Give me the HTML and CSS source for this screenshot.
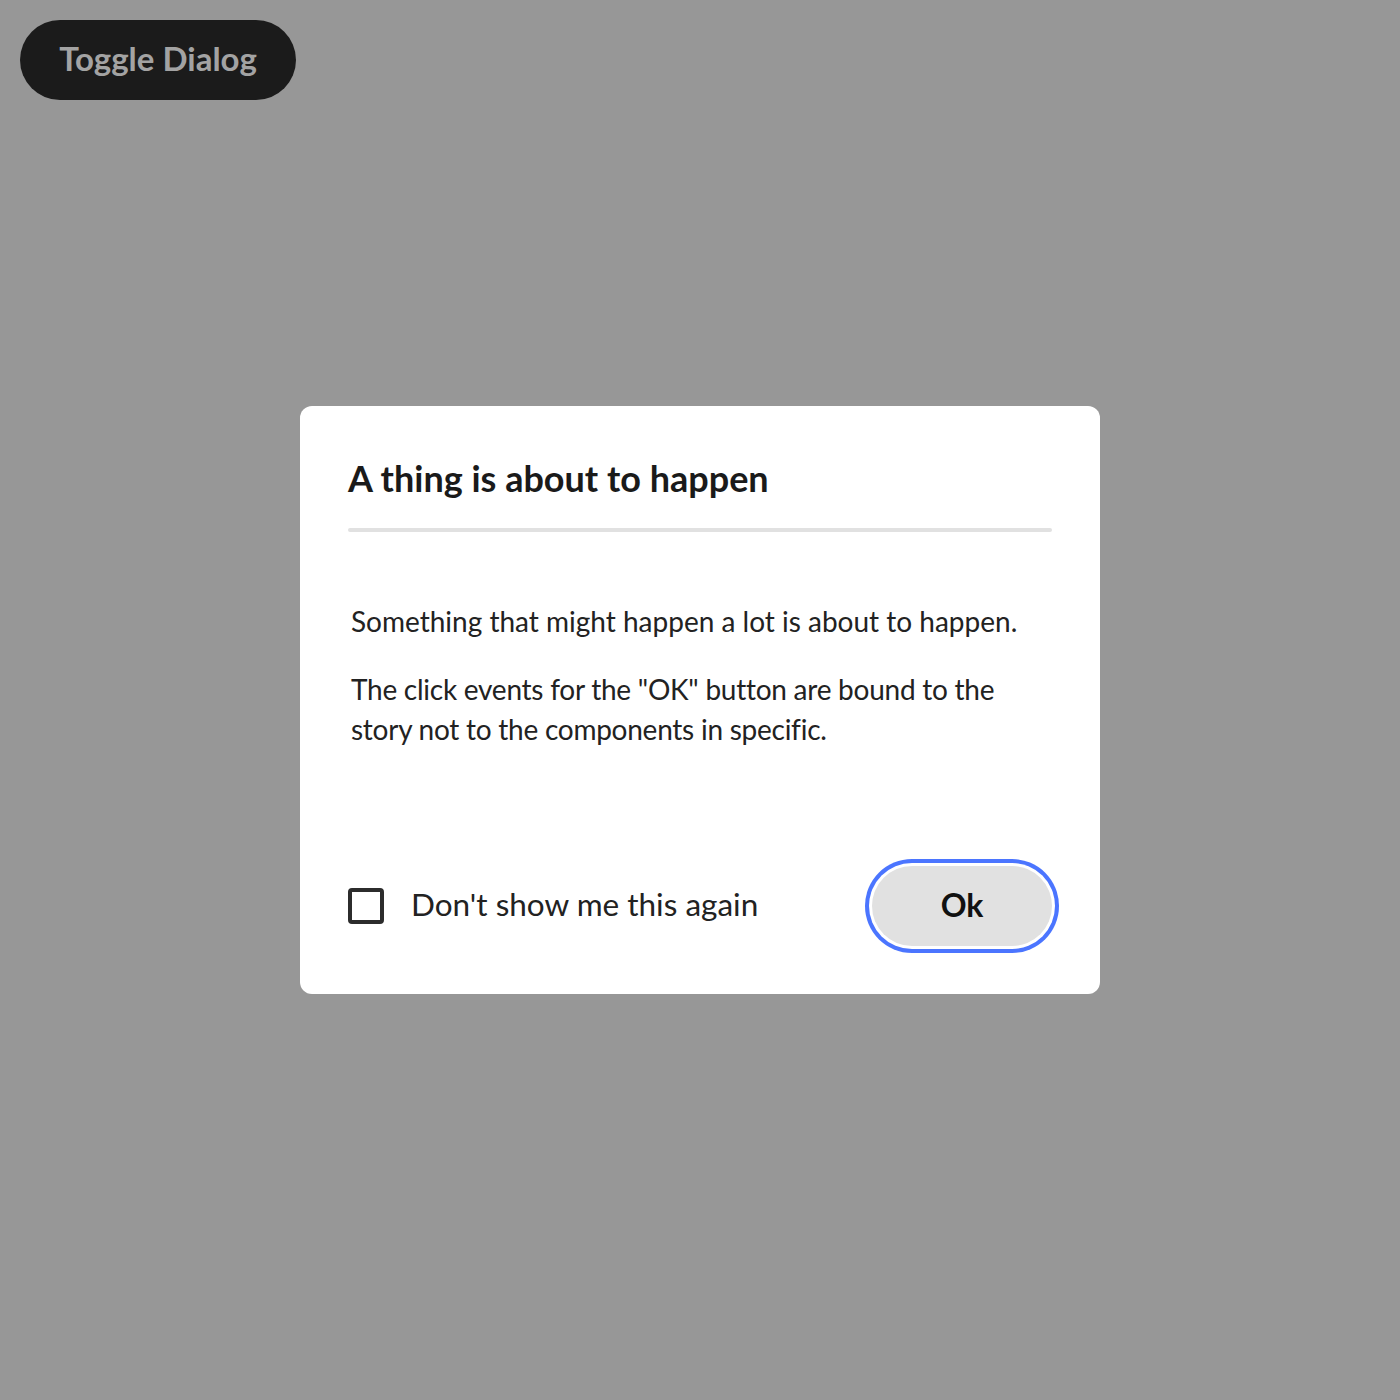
FILE: index.html
```html
<!DOCTYPE html>
<html lang="en">
<head>
<meta charset="utf-8">
<title>Dialog</title>
<link rel="stylesheet" href="styles.css">
</head>
<body>
  <main class="page">
    <button class="toggle-btn" type="button">Toggle Dialog</button>
  </main>
  <div class="overlay">
    <section class="dialog" role="dialog" aria-labelledby="dlg-title">
      <h2 class="dialog-title" id="dlg-title">A thing is about to happen</h2>
      <hr class="dialog-divider">
      <div class="dialog-body">
        <p>Something that might happen a lot is about to happen.</p>
        <p>The click events for the "OK" button are bound to the story not to the components in specific.</p>
      </div>
      <footer class="dialog-footer">
        <label class="check">
          <span class="check-box"></span>
          <span class="check-label">Don't show me this again</span>
        </label>
        <button class="ok-btn" type="button">Ok</button>
      </footer>
    </section>
  </div>
</body>
</html>
```
FILE: styles.css
```css
html, body {
  margin: 0;
  padding: 0;
}
body {
  background: #979797;
  font-family: Lato, "Noto Sans", "Liberation Sans", sans-serif;
  width: 1400px;
  height: 1400px;
}
.page {
  padding: 20px;
}
.toggle-btn {
  display: flex;
  align-items: center;
  justify-content: center;
  width: 276px;
  height: 80px;
  border: none;
  border-radius: 40px;
  background: #1b1b1b;
  color: #a3a3a3;
  font-family: inherit;
  font-weight: 700;
  font-size: 33px;
  padding: 0 0 4px;
}
.overlay {
  position: fixed;
  inset: 0;
  display: flex;
  align-items: center;
  justify-content: center;
}
.dialog {
  width: 800px;
  height: 588px;
  box-sizing: border-box;
  background: #fff;
  border-radius: 12px;
  padding: 48px;
  display: flex;
  flex-direction: column;
}
.dialog-title {
  margin: 0;
  font-size: 36px;
  font-weight: 700;
  line-height: 52px;
  color: #1a1a1a;
  margin-top: -2px;
}
.dialog-divider {
  margin: 24px 0 0;
  height: 4px;
  border: none;
  border-radius: 2px;
  background: #e1e1e1;
}
.dialog-body {
  margin-top: 69px;
  padding-left: 3px;
  font-size: 28px;
  line-height: 40px;
  color: #222;
  flex: 1;
}
.dialog-body p {
  margin: 0 0 28px;
}
.dialog-body p + p {
  letter-spacing: -0.25px;
}
.dialog-footer {
  display: flex;
  align-items: center;
  justify-content: space-between;
}
.check {
  display: flex;
  align-items: center;
  gap: 27px;
}
.check-box {
  width: 36px;
  height: 36px;
  box-sizing: border-box;
  border: 4px solid #2c2c2c;
  border-radius: 4px;
}
.check-label {
  font-size: 31.5px;
  color: #222;
  padding-bottom: 4px;
}
.ok-btn {
  width: 180px;
  height: 80px;
  border: none;
  border-radius: 40px;
  background: #e1e1e1;
  color: #111;
  font-family: inherit;
  font-size: 32px;
  font-weight: 700;
  box-shadow: 0 0 0 3px #fff, 0 0 0 7px #4b75ff;
  padding: 0 0 4px;
}
```
